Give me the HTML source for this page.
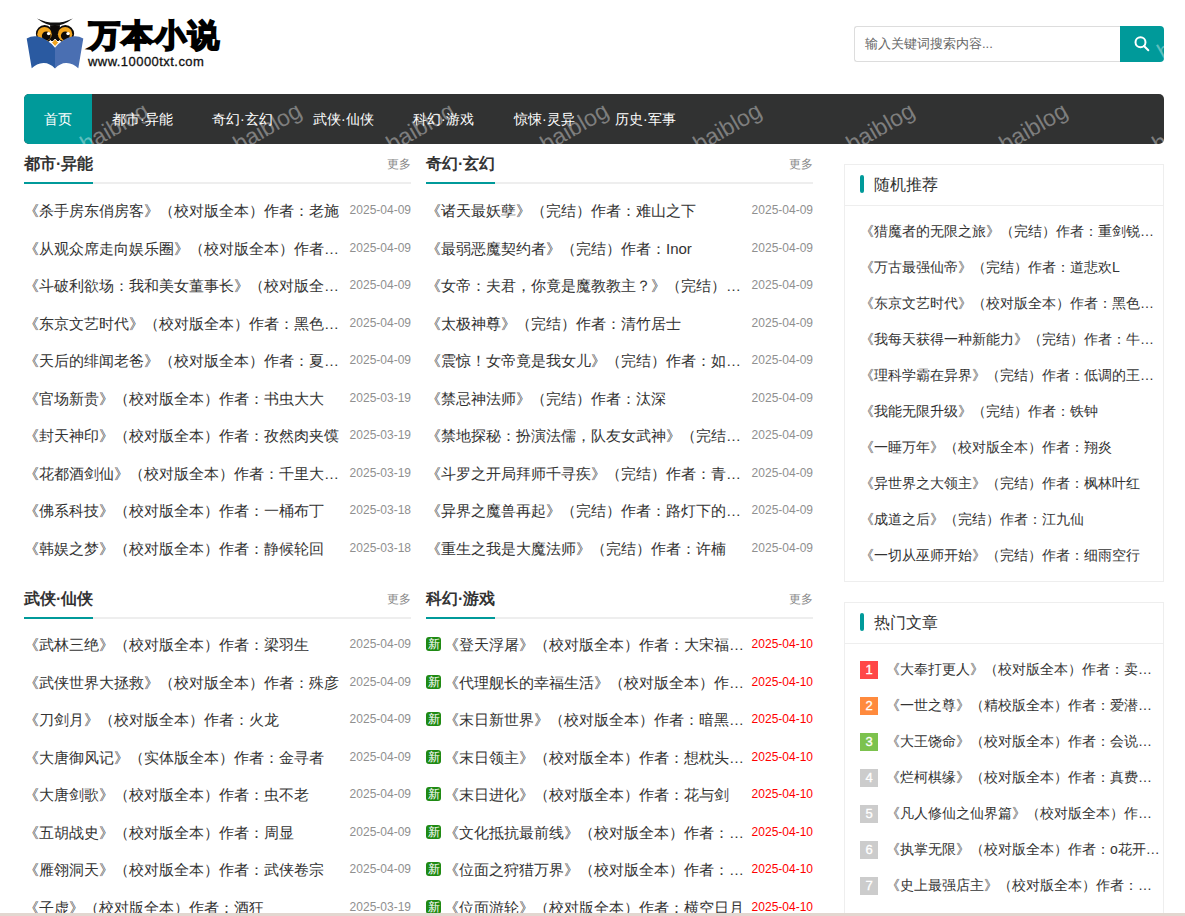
<!DOCTYPE html>
<html><head><meta charset="utf-8">
<style>
*{margin:0;padding:0;box-sizing:border-box}
html,body{width:1185px;height:916px;overflow:hidden;background:#fff}
body{font-family:"Liberation Sans",sans-serif;color:#333;position:relative}
ul{list-style:none}
.abs{position:absolute}
.logo-txt{position:absolute;left:89px;top:15px;font-size:31px;font-weight:900;line-height:42px;color:#000;white-space:nowrap;-webkit-text-stroke:2.2px #000;letter-spacing:2px}
.logo-url{position:absolute;left:88px;top:54px;font-size:13px;line-height:15px;color:#111;white-space:nowrap;letter-spacing:0.45px;-webkit-text-stroke:0.3px #111}
.search{position:absolute;left:854px;top:26px;width:266px;height:36px;border:1px solid #ddd;border-right:none;border-radius:3px 0 0 3px;font-size:13px;color:#666;line-height:34px;padding-left:10px}
.sbtn{position:absolute;left:1120px;top:26px;width:44px;height:36px;background:#009a9a;border-radius:0 4px 4px 0;overflow:hidden}
.sbtn svg{position:absolute;left:0;top:0}
.nav{position:absolute;left:24px;top:94px;width:1140px;height:50px;background:#313232;border-radius:5px;overflow:hidden}
.nav a{position:absolute;top:0;height:50px;line-height:50px;color:#fff;font-size:14px;font-weight:500;text-decoration:none;white-space:nowrap}
.nav a.on{left:0;width:68px;background:#009a9a;text-align:center}
.sec{position:absolute;width:387px}
.sec .hd{height:38px;border-bottom:2px solid #eee;position:relative}
.sec .hd b{position:absolute;left:0;top:0;height:38px;line-height:36px;font-size:16px;font-weight:bold;color:#333;border-bottom:2px solid #009a9a;white-space:nowrap}
.sec .hd i{position:absolute;right:0;top:0;line-height:36px;font-size:12px;font-style:normal;color:#888}
.sec ul{margin-top:8px}
.sec li{height:37.5px;line-height:37.5px;position:relative;font-size:15px;white-space:nowrap;color:#333}
.sec li .d{position:absolute;right:0;top:0;font-size:12px;color:#8f8f8f}
.sec li .d.r{color:#f00}
.xin{display:inline-block;width:15px;height:14px;background:#1f8a14;color:#fff;font-size:12px;line-height:14px;text-align:center;border-radius:3px;vertical-align:middle;margin-right:3px;position:relative;top:-2px;overflow:hidden}
.box{position:absolute;left:844px;width:320px;border:1px solid #eee}
.box .bh{height:41px;border-bottom:1px solid #eee;position:relative}
.box .bh s{position:absolute;left:15px;top:10px;width:4px;height:18px;background:#009a9a;border-radius:2px}
.box .bh span{position:absolute;left:29px;top:0;line-height:40px;font-size:16px;color:#333}
.box ul{padding:7px 0 8px 15px}
.box li{height:36px;line-height:36px;font-size:14px;white-space:nowrap;color:#333}
.box li em{font-style:normal;display:inline-block;width:18px;height:18px;line-height:18px;text-align:center;color:#fff;font-size:13px;-webkit-text-stroke:0.3px #fff;background:#ccc;margin-right:8px;vertical-align:middle;position:relative;top:0px}
.wm{position:absolute;font-size:23px;line-height:23px;letter-spacing:0px;color:rgba(255,255,255,0.38);transform-origin:0 100%;transform:rotate(-30deg);white-space:nowrap;font-family:"Liberation Sans",sans-serif}
.bot{position:absolute;left:0;top:913px;width:1185px;height:3px;background:#e2d7d0}
</style></head><body>
<svg class="abs" style="left:24px;top:14px" width="62" height="58" viewBox="24 14 62 58">
<path d="M37 18.4 Q54.9 32.6 72.8 18.4 Q54.9 26.8 37 18.4Z" fill="#111"/>
<circle cx="44.6" cy="33.8" r="8.7" fill="#0d0a08"/>
<circle cx="65.4" cy="33.8" r="8.7" fill="#0d0a08"/>
<path d="M50 25.3 Q55 24.8 60 25.3 L59 41 L51 41Z" fill="#0d0a08"/>
<circle cx="44.5" cy="34.2" r="7.2" fill="#f2a51e"/>
<circle cx="65.1" cy="34.2" r="7.2" fill="#f2a51e"/>
<circle cx="46.3" cy="35.9" r="4.4" fill="#0d0a08"/>
<circle cx="65.3" cy="35.8" r="4.4" fill="#0d0a08"/>
<circle cx="48.6" cy="33.6" r="1.7" fill="#fff"/>
<circle cx="68" cy="33.6" r="1.7" fill="#fff"/>
<path d="M55.1 39 L58.5 42.7 L55.1 46.4 L51.7 42.7Z" fill="#f2a51e" stroke="#fff" stroke-width="0.8"/>
<path d="M26.7 38.4 Q32 35.6 38 36.6 Q47.5 38.8 55 47.8 L55 68.4 Q49.5 62.6 43.4 62.9 Q36.5 63.3 31.7 68.2Z" fill="#2a5aa1"/>
<path d="M83.3 38.4 Q78 35.6 72 36.6 Q62.5 38.8 55 47.8 L55 68.4 Q60.5 62.6 66.6 62.9 Q73.5 63.3 78.3 68.2Z" fill="#4a6fb2"/>
</svg>
<div class="logo-txt">万本小说</div>
<div class="logo-url">www.10000txt.com</div>
<div class="search">输入关键词搜索内容...</div>
<div class="sbtn"><span class="wm" style="left:45px;top:15px">haiblog</span><svg width="44" height="36" viewBox="0 0 44 36"><circle cx="20.5" cy="16.3" r="5" fill="none" stroke="#fff" stroke-width="2"/><line x1="24" y1="20" x2="28.3" y2="24.3" stroke="#fff" stroke-width="2" stroke-linecap="round"/></svg></div>
<div class="nav">
<a class="on">首页</a>
<a style="left:88px">都市·异能</a>
<a style="left:188px">奇幻·玄幻</a>
<a style="left:289px">武侠·仙侠</a>
<a style="left:389px">科幻·游戏</a>
<a style="left:490px">惊悚·灵异</a>
<a style="left:591px">历史·军事</a>
<span class="wm" style="left:-89.2px;top:39px">haiblog</span><span class="wm" style="left:64.0px;top:39px">haiblog</span><span class="wm" style="left:217.2px;top:39px">haiblog</span><span class="wm" style="left:370.4px;top:39px">haiblog</span><span class="wm" style="left:523.6px;top:39px">haiblog</span><span class="wm" style="left:676.8px;top:39px">haiblog</span><span class="wm" style="left:830.0px;top:39px">haiblog</span><span class="wm" style="left:983.2px;top:39px">haiblog</span><span class="wm" style="left:1136.4px;top:39px">haiblog</span>
</div>
<div class="sec" style="left:24px;top:146px"><div class="hd"><b>都市·异能</b><i>更多</i></div><ul style="margin-top:8px">
<li>《杀手房东俏房客》（校对版全本）作者：老施<span class="d">2025-04-09</span></li>
<li>《从观众席走向娱乐圈》（校对版全本）作者…<span class="d">2025-04-09</span></li>
<li>《斗破利欲场：我和美女董事长》（校对版全…<span class="d">2025-04-09</span></li>
<li>《东京文艺时代》（校对版全本）作者：黑色…<span class="d">2025-04-09</span></li>
<li>《天后的绯闻老爸》（校对版全本）作者：夏…<span class="d">2025-04-09</span></li>
<li>《官场新贵》（校对版全本）作者：书虫大大<span class="d">2025-03-19</span></li>
<li>《封天神印》（校对版全本）作者：孜然肉夹馍<span class="d">2025-03-19</span></li>
<li>《花都酒剑仙》（校对版全本）作者：千里大…<span class="d">2025-03-19</span></li>
<li>《佛系科技》（校对版全本）作者：一桶布丁<span class="d">2025-03-18</span></li>
<li>《韩娱之梦》（校对版全本）作者：静候轮回<span class="d">2025-03-18</span></li>
</ul></div>
<div class="sec" style="left:426px;top:146px"><div class="hd"><b>奇幻·玄幻</b><i>更多</i></div><ul style="margin-top:8px">
<li>《诸天最妖孽》（完结）作者：难山之下<span class="d">2025-04-09</span></li>
<li>《最弱恶魔契约者》（完结）作者：Inor<span class="d">2025-04-09</span></li>
<li>《女帝：夫君，你竟是魔教教主？》（完结）…<span class="d">2025-04-09</span></li>
<li>《太极神尊》（完结）作者：清竹居士<span class="d">2025-04-09</span></li>
<li>《震惊！女帝竟是我女儿》（完结）作者：如…<span class="d">2025-04-09</span></li>
<li>《禁忌神法师》（完结）作者：汰深<span class="d">2025-04-09</span></li>
<li>《禁地探秘：扮演法儒，队友女武神》（完结…<span class="d">2025-04-09</span></li>
<li>《斗罗之开局拜师千寻疾》（完结）作者：青…<span class="d">2025-04-09</span></li>
<li>《异界之魔兽再起》（完结）作者：路灯下的…<span class="d">2025-04-09</span></li>
<li>《重生之我是大魔法师》（完结）作者：许楠<span class="d">2025-04-09</span></li>
</ul></div>
<div class="sec" style="left:24px;top:581px"><div class="hd"><b>武侠·仙侠</b><i>更多</i></div><ul style="margin-top:7px">
<li>《武林三绝》（校对版全本）作者：梁羽生<span class="d">2025-04-09</span></li>
<li>《武侠世界大拯救》（校对版全本）作者：殊彦<span class="d">2025-04-09</span></li>
<li>《刀剑月》（校对版全本）作者：火龙<span class="d">2025-04-09</span></li>
<li>《大唐御风记》（实体版全本）作者：金寻者<span class="d">2025-04-09</span></li>
<li>《大唐剑歌》（校对版全本）作者：虫不老<span class="d">2025-04-09</span></li>
<li>《五胡战史》（校对版全本）作者：周显<span class="d">2025-04-09</span></li>
<li>《雁翎洞天》（校对版全本）作者：武侠卷宗<span class="d">2025-04-09</span></li>
<li>《子虚》（校对版全本）作者：酒狂<span class="d">2025-03-19</span></li>
</ul></div>
<div class="sec" style="left:426px;top:581px"><div class="hd"><b>科幻·游戏</b><i>更多</i></div><ul style="margin-top:7px">
<li><span class="xin">新</span>《登天浮屠》（校对版全本）作者：大宋福…<span class="d r">2025-04-10</span></li>
<li><span class="xin">新</span>《代理舰长的幸福生活》（校对版全本）作…<span class="d r">2025-04-10</span></li>
<li><span class="xin">新</span>《末日新世界》（校对版全本）作者：暗黑…<span class="d r">2025-04-10</span></li>
<li><span class="xin">新</span>《末日领主》（校对版全本）作者：想枕头…<span class="d r">2025-04-10</span></li>
<li><span class="xin">新</span>《末日进化》（校对版全本）作者：花与剑<span class="d r">2025-04-10</span></li>
<li><span class="xin">新</span>《文化抵抗最前线》（校对版全本）作者：…<span class="d r">2025-04-10</span></li>
<li><span class="xin">新</span>《位面之狩猎万界》（校对版全本）作者：…<span class="d r">2025-04-10</span></li>
<li><span class="xin">新</span>《位面游轮》（校对版全本）作者：横空日月<span class="d r">2025-04-10</span></li>
</ul></div>
<div class="box" style="top:164px"><div class="bh"><s></s><span>随机推荐</span></div><ul>
<li>《猎魔者的无限之旅》（完结）作者：重剑锐…</li>
<li>《万古最强仙帝》（完结）作者：道悲欢L</li>
<li>《东京文艺时代》（校对版全本）作者：黑色…</li>
<li>《我每天获得一种新能力》（完结）作者：牛…</li>
<li>《理科学霸在异界》（完结）作者：低调的王…</li>
<li>《我能无限升级》（完结）作者：铁钟</li>
<li>《一睡万年》（校对版全本）作者：翔炎</li>
<li>《异世界之大领主》（完结）作者：枫林叶红</li>
<li>《成道之后》（完结）作者：江九仙</li>
<li>《一切从巫师开始》（完结）作者：细雨空行</li>
</ul></div>
<div class="box" style="top:602px"><div class="bh"><s></s><span>热门文章</span></div><ul style="padding-bottom:30px">
<li><em style="background:#ff4747">1</em>《大奉打更人》（校对版全本）作者：卖…</li>
<li><em style="background:#ff8a3d">2</em>《一世之尊》（精校版全本）作者：爱潜…</li>
<li><em style="background:#7cc24e">3</em>《大王饶命》（校对版全本）作者：会说…</li>
<li><em style="background:#ccc">4</em>《烂柯棋缘》（校对版全本）作者：真费…</li>
<li><em style="background:#ccc">5</em>《凡人修仙之仙界篇》（校对版全本）作…</li>
<li><em style="background:#ccc">6</em>《执掌无限》（校对版全本）作者：o花开…</li>
<li><em style="background:#ccc">7</em>《史上最强店主》（校对版全本）作者：…</li>
</ul></div>
<div class="bot"></div>
</body></html>
